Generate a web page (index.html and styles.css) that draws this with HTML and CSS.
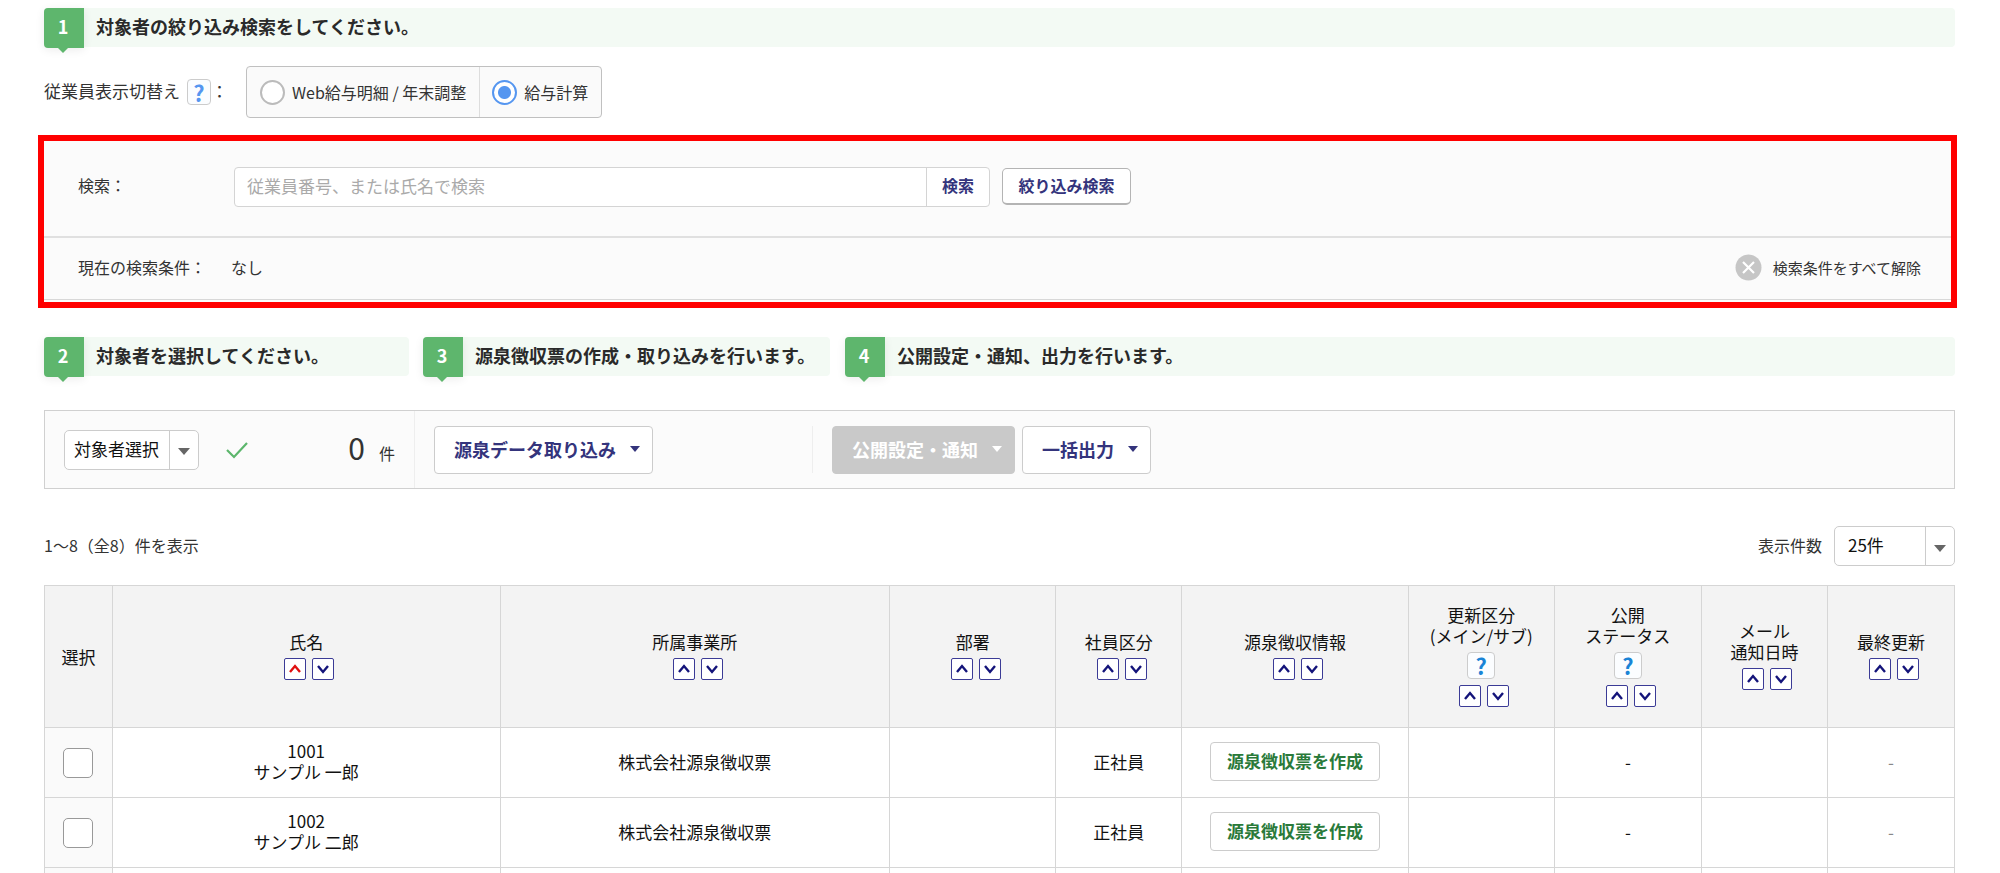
FILE: index.html
```
<!DOCTYPE html>
<html lang="ja">
  <head>
    <meta charset="UTF-8" />
    <meta name="viewport" content="width=device-width, initial-scale=1.0" />
    <title>源泉徴収票</title>
    <link rel="stylesheet" href="styles.css">
  </head>
  <body>
    <!-- アイコン定義 -->
    <svg display="none">
      <symbol id="up" viewBox="0 0 22 22">
        <path d="M6 14L11 8L16 14" fill="none" stroke="currentColor" stroke-width="2.4"></path>
      </symbol>
      <symbol id="down" viewBox="0 0 22 22">
        <path d="M6 8L11 14L16 8" fill="none" stroke="currentColor" stroke-width="2.4"></path>
      </symbol>
      <symbol id="caret" viewBox="0 0 12 7">
        <path d="M0 0H12L6 7Z" fill="currentColor"></path>
      </symbol>
    </svg>

    <main class="page">
      <h2 class="step"><span class="step-num">1</span>対象者の絞り込み検索をしてください。</h2>

      <!-- 表示切替え -->
      <div class="switch">
        <div class="switch-label">
          <span>従業員表示切替え</span>
          <button type="button" class="help help-small">?</button>
          <span>：</span>
        </div>
        <div class="switch-group">
          <label class="switch-item"><input type="radio" name="view" />Web給与明細 / 年末調整</label>
          <label class="switch-item"><input type="radio" name="view" checked />給与計算</label>
        </div>
      </div>

      <!-- 検索 -->
      <section class="search">
        <form class="search-form">
          <label class="search-label" for="keyword">検索：</label>
          <div class="search-box">
            <input id="keyword" class="search-input" type="text" placeholder="従業員番号、または氏名で検索" />
            <button type="button" class="search-btn">検索</button>
          </div>
          <button type="button" class="filter-btn">絞り込み検索</button>
        </form>
        <div class="search-state">
          <span class="state-label">現在の検索条件：</span>
          <span>なし</span>
          <button type="button" class="clear-btn">
            <svg width="27" height="27" viewBox="0 0 27 27">
              <circle cx="13.5" cy="13.5" r="13" fill="#c6c6c6"></circle>
              <path d="M8 8L19 19M19 8L8 19" stroke="#fff" stroke-width="2.2"></path>
            </svg>
            検索条件をすべて解除
          </button>
        </div>
      </section>

      <div class="steps">
        <h2 class="step step-select"><span class="step-num">2</span>対象者を選択してください。</h2>
        <h2 class="step step-import"><span class="step-num">3</span>源泉徴収票の作成・取り込みを行います。</h2>
        <h2 class="step step-output"><span class="step-num">4</span>公開設定・通知、出力を行います。</h2>
      </div>

      <!-- 操作バー -->
      <div class="toolbar">
        <div class="tool tool-select">
          <div class="select target-select">
            <select aria-label="対象者選択">
              <option>対象者選択</option>
            </select>
            <span class="select-arrow"><svg width="12" height="7"><use href="#caret"></use></svg></span>
          </div>
          <svg class="check" width="22" height="18" viewBox="0 0 22 18">
            <path d="M1 9L8 16L21 2" fill="none" stroke="#5cb66c" stroke-width="2.2"></path>
          </svg>
          <div class="count"><span class="count-num">0</span>件</div>
        </div>
        <div class="tool tool-import">
          <button type="button" class="menu-btn">源泉データ取り込み<svg width="10" height="6"><use href="#caret"></use></svg></button>
        </div>
        <div class="tool tool-output">
          <button type="button" class="menu-btn" disabled>公開設定・通知<svg width="10" height="6"><use href="#caret"></use></svg></button>
          <button type="button" class="menu-btn">一括出力<svg width="10" height="6"><use href="#caret"></use></svg></button>
        </div>
      </div>

      <div class="pager">
        <span>1～8（全8）件を表示</span>
        <div class="per-page">
          <label for="per-page">表示件数</label>
          <div class="select">
            <select id="per-page">
              <option>25件</option>
            </select>
            <span class="select-arrow"><svg width="12" height="7"><use href="#caret"></use></svg></span>
          </div>
        </div>
      </div>

      <!-- 一覧 -->
      <table class="list">
        <colgroup>
          <col class="col-check" />
          <col class="col-name" />
          <col class="col-office" />
          <col class="col-dept" />
          <col class="col-type" />
          <col class="col-info" />
          <col class="col-kind" />
          <col class="col-status" />
          <col class="col-mail" />
          <col class="col-update" />
        </colgroup>
        <thead>
          <tr>
            <th>選択</th>
            <th>
              氏名
              <div class="sort">
                <button type="button" class="active" aria-label="昇順"><svg width="22" height="22"><use href="#up"></use></svg></button>
                <button type="button" aria-label="降順"><svg width="22" height="22"><use href="#down"></use></svg></button>
              </div>
            </th>
            <th>
              所属事業所
              <div class="sort">
                <button type="button" aria-label="昇順"><svg width="22" height="22"><use href="#up"></use></svg></button>
                <button type="button" aria-label="降順"><svg width="22" height="22"><use href="#down"></use></svg></button>
              </div>
            </th>
            <th>
              部署
              <div class="sort">
                <button type="button" aria-label="昇順"><svg width="22" height="22"><use href="#up"></use></svg></button>
                <button type="button" aria-label="降順"><svg width="22" height="22"><use href="#down"></use></svg></button>
              </div>
            </th>
            <th>
              社員区分
              <div class="sort">
                <button type="button" aria-label="昇順"><svg width="22" height="22"><use href="#up"></use></svg></button>
                <button type="button" aria-label="降順"><svg width="22" height="22"><use href="#down"></use></svg></button>
              </div>
            </th>
            <th>
              源泉徴収情報
              <div class="sort">
                <button type="button" aria-label="昇順"><svg width="22" height="22"><use href="#up"></use></svg></button>
                <button type="button" aria-label="降順"><svg width="22" height="22"><use href="#down"></use></svg></button>
              </div>
            </th>
            <th>
              更新区分<br />(メイン/サブ)
              <button type="button" class="help">?</button>
              <div class="sort">
                <button type="button" aria-label="昇順"><svg width="22" height="22"><use href="#up"></use></svg></button>
                <button type="button" aria-label="降順"><svg width="22" height="22"><use href="#down"></use></svg></button>
              </div>
            </th>
            <th>
              公開<br />ステータス
              <button type="button" class="help">?</button>
              <div class="sort">
                <button type="button" aria-label="昇順"><svg width="22" height="22"><use href="#up"></use></svg></button>
                <button type="button" aria-label="降順"><svg width="22" height="22"><use href="#down"></use></svg></button>
              </div>
            </th>
            <th>
              メール<br />通知日時
              <div class="sort">
                <button type="button" aria-label="昇順"><svg width="22" height="22"><use href="#up"></use></svg></button>
                <button type="button" aria-label="降順"><svg width="22" height="22"><use href="#down"></use></svg></button>
              </div>
            </th>
            <th>
              最終更新
              <div class="sort">
                <button type="button" aria-label="昇順"><svg width="22" height="22"><use href="#up"></use></svg></button>
                <button type="button" aria-label="降順"><svg width="22" height="22"><use href="#down"></use></svg></button>
              </div>
            </th>
          </tr>
        </thead>
        <tbody>
          <tr>
            <td><input type="checkbox" aria-label="1001 を選択" /></td>
            <td>1001<br />サンプル 一郎</td>
            <td>株式会社源泉徴収票</td>
            <td></td>
            <td>正社員</td>
            <td><button type="button" class="create-btn">源泉徴収票を作成</button></td>
            <td></td>
            <td>-</td>
            <td></td>
            <td class="muted">-</td>
          </tr>
          <tr>
            <td><input type="checkbox" aria-label="1002 を選択" /></td>
            <td>1002<br />サンプル 二郎</td>
            <td>株式会社源泉徴収票</td>
            <td></td>
            <td>正社員</td>
            <td><button type="button" class="create-btn">源泉徴収票を作成</button></td>
            <td></td>
            <td>-</td>
            <td></td>
            <td class="muted">-</td>
          </tr>
          <tr>
            <td></td><td></td><td></td><td></td><td></td><td></td><td></td><td></td><td></td><td></td>
          </tr>
        </tbody>
      </table>
    </main>
  </body>
</html>
```
FILE: styles.css
```
* {
  box-sizing: border-box;
}

body {
  margin: 0;
  background-color: #fff;
  color: #333;
  font: 16px/21px 'Noto Sans CJK JP', sans-serif;
}

button,
input,
select {
  margin: 0;
  font: inherit;
  color: inherit;
}

button {
  padding: 0;
  cursor: pointer;
}

.page {
  height: 100vh;
  padding: 8px 45px 0 44px;
  overflow: hidden;
}

/* 手順の見出し */
.step {
  display: flex;
  height: 39px;
  margin: 0;
  border-radius: 4px;
  background-color: #f3faf4;
  color: #2a2a2a;
  font-size: 18px;
  font-weight: 700;
  line-height: 36px;
  white-space: nowrap;
}

.step-num {
  position: relative;
  width: 40px;
  height: 40px;
  margin-right: 12px;
  padding-right: 2px;
  border-radius: 4px 0 0 4px;
  background-color: #5eb66d;
  box-shadow: 0 2px 10px rgba(0, 0, 0, 0.08);
  color: #fff;
  text-align: center;
}

.step-num::after {
  content: '';
  position: absolute;
  top: 100%;
  left: 14px;
  border: 5px solid transparent;
  border-top-color: #5eb66d;
  border-bottom: 0;
}

.steps {
  display: flex;
  margin-top: 29px;
}

.step-select {
  width: 365px;
  margin-right: 14px;
}

.step-import {
  width: 407px;
  margin-right: 15px;
}

.step-output {
  flex: 1;
}

/* 表示切替え */
.switch {
  display: flex;
  align-items: center;
  margin-top: 19px;
}

.switch-label {
  display: flex;
  align-items: center;
  width: 202px;
  font-size: 17px;
}

.switch-label span {
  padding-bottom: 4px;
}

.switch-group {
  display: flex;
  height: 52px;
  border: 1px solid #c0c0c0;
  border-radius: 4px;
  background-color: #fafafa;
}

.switch-item {
  display: flex;
  align-items: center;
  padding: 0 13px;
}

.switch-item + .switch-item {
  padding-left: 12px;
  border-left: 1px solid #ddd;
}

.switch-item input {
  appearance: none;
  width: 25px;
  height: 25px;
  margin-right: 7px;
  border: 2px solid #bbb;
  border-radius: 50%;
  background-color: #fff;
}

.switch-item input:checked {
  border-color: #5596f0;
  background: radial-gradient(circle, #5596f0 6px, #fff 7px);
}

.help {
  display: block;
  width: 28px;
  height: 27px;
  margin: 6px auto;
  border: 1px solid #ccc;
  border-radius: 4px;
  background-color: #fbfdff;
  color: #1a84d6;
  font-size: 22px;
  font-weight: 700;
  line-height: 24px;
}

.help-small {
  width: 24px;
  height: 26px;
  margin: 0 0 0 7px;
  color: #5596f0;
}

/* 検索 */
.search {
  margin: 17px -2px 0 -6px;
  padding-bottom: 2px;
  border: 6px solid #f00;
  background-color: #fbfbfb;
}

.search-form {
  display: flex;
  align-items: center;
  height: 97px;
  padding: 0 34px 4px;
  border-bottom: 2px solid #e0e0e0;
}

.search-label {
  width: 156px;
  padding-bottom: 3px;
}

.search-box {
  display: flex;
  width: 756px;
  height: 40px;
  margin-right: 12px;
  border: 1px solid #d4d4d4;
  border-radius: 4px;
  background-color: #fff;
}

.search-input {
  flex: 1;
  min-width: 0;
  padding: 0 12px 2px;
  border: 0;
  background: none;
  font-size: 17px;
}

.search-input::placeholder {
  color: #aaa;
}

.search-btn {
  width: 63px;
  padding-bottom: 2px;
  border: 0;
  border-left: 1px solid #d4d4d4;
  background: none;
  color: #34347c;
  font-weight: 700;
}

.filter-btn {
  width: 129px;
  height: 37px;
  padding-bottom: 1px;
  border: 1px solid #b4b4b4;
  border-bottom-width: 2px;
  border-radius: 5px;
  background-color: #fff;
  color: #34347c;
  font-weight: 700;
}

.search-state {
  display: flex;
  align-items: center;
  height: 62px;
  padding: 0 30px 2px 34px;
  border-bottom: 1px solid #d8d8d8;
}

.state-label {
  width: 153px;
}

.clear-btn {
  display: flex;
  align-items: center;
  gap: 11px;
  margin-left: auto;
  border: 0;
  background: none;
  font-size: 15px;
}

/* 操作バー */
.toolbar {
  display: flex;
  height: 79px;
  margin-top: 34px;
  border: 1px solid #d0d0d0;
  background-color: #fbfbfb;
}

.tool {
  display: flex;
  align-items: center;
  gap: 7px;
  padding-left: 19px;
}

.tool-select {
  width: 369px;
}

.tool-import {
  width: 398px;
  border-left: 1px solid #eee;
}

.tool-output {
  flex: 1;
  margin: 15px 0;
  border-left: 1px solid #eee;
}

.check {
  margin-left: 20px;
}

.count {
  margin: 0 19px 0 auto;
  line-height: 36px;
}

.count-num {
  margin-right: 14px;
  font-size: 30px;
}

.menu-btn {
  display: flex;
  align-items: center;
  gap: 14px;
  height: 48px;
  padding: 0 12px 1px 19px;
  border: 1px solid #ccc;
  border-radius: 4px;
  background-color: #fff;
  color: #34347c;
  font-size: 18px;
  font-weight: 700;
  white-space: nowrap;
}

.menu-btn:disabled {
  border-color: #c9c9c9;
  background-color: #c9c9c9;
  color: #fff;
}

/* セレクト */
.select {
  display: grid;
  width: 121px;
  height: 40px;
  border: 1px solid #ccc;
  border-radius: 5px;
  background-color: #fff;
  color: #111;
}

.target-select {
  width: 135px;
}

.select > * {
  grid-area: 1 / 1;
}

.select select {
  appearance: none;
  width: 100%;
  padding: 0 30px 3px 13px;
  border: 0;
  background: none;
  font-size: 17px;
}

.target-select select {
  padding-left: 9px;
}

.select-arrow {
  display: flex;
  align-items: center;
  justify-content: center;
  justify-self: end;
  width: 29px;
  padding-top: 4px;
  border-left: 1px solid #ccc;
  color: #666;
  pointer-events: none;
}

.pager {
  display: flex;
  align-items: center;
  justify-content: space-between;
  margin: 37px 0 19px;
}

.pager > span,
.per-page label {
  padding-bottom: 2px;
}

.per-page {
  display: flex;
  align-items: center;
  gap: 12px;
}

/* 一覧 */
.list {
  width: 100%;
  border-collapse: collapse;
  table-layout: fixed;
  color: #111;
  font-size: 17px;
  text-align: center;
}

.list th,
.list td {
  padding: 0;
  border: 1px solid #d6d6d6;
}

.list th {
  height: 142px;
  background-color: #f3f3f3;
  font-weight: 400;
}

.list td {
  height: 70px;
  padding-bottom: 3px;
}

.list td:first-child {
  padding-bottom: 0;
  background-color: #fafafa;
}

.list .muted {
  color: #888;
}

.list input {
  appearance: none;
  display: block;
  width: 30px;
  height: 30px;
  margin: 0 auto;
  border: 1px solid #999;
  border-radius: 5px;
  background-color: #fff;
}

.col-check {
  width: 3.55%;
}

.col-name {
  width: 20.3%;
}

.col-office {
  width: 20.4%;
}

.col-dept {
  width: 8.7%;
}

.col-type,
.col-mail {
  width: 6.6%;
}

.col-info {
  width: 11.85%;
}

.col-kind {
  width: 7.65%;
}

.col-status {
  width: 7.7%;
}

.col-update {
  width: 6.65%;
}

.sort {
  display: flex;
  justify-content: center;
  gap: 6px;
  margin: 6px 0 3px;
  padding-left: 6px;
}

.sort button {
  width: 22px;
  height: 22px;
  border: 1px solid #3b3b96;
  border-radius: 2px;
  background-color: #fff;
  color: #14147a;
}

.sort svg {
  display: block;
  margin: -1px;
}

.sort .active {
  color: #e01010;
}

.create-btn {
  width: 170px;
  height: 39px;
  padding-bottom: 1px;
  border: 1px solid #ccc;
  border-radius: 4px;
  background-color: #fff;
  color: #2a7a3a;
  font-weight: 700;
}
```
